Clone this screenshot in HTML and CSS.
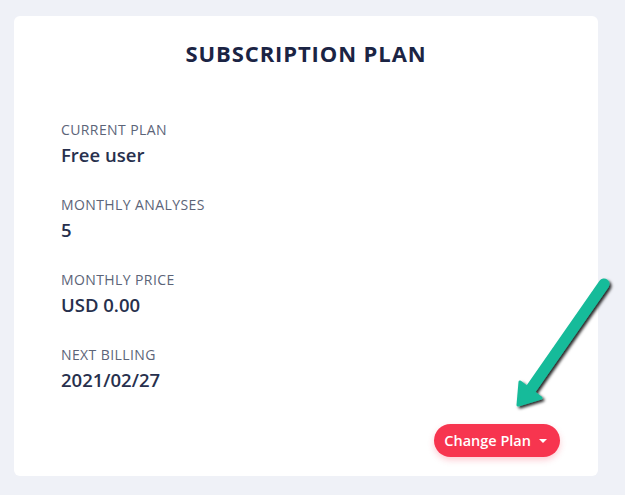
FILE: index.html
```html
<!DOCTYPE html>
<html lang="en">
<head>
    <meta charset="UTF-8">
    <meta name="viewport" content="width=device-width, initial-scale=1.0">
    <title>Subscription Plan</title>
    <link rel="stylesheet" href="styles.css">
</head>
<body>

    <div class="card">
        <h1>SUBSCRIPTION PLAN</h1>

        <div class="plan-info">
            <div class="item">
                <div class="label">CURRENT PLAN</div>
                <div class="value">Free user</div>
            </div>
            <div class="item">
                <div class="label">MONTHLY ANALYSES</div>
                <div class="value">5</div>
            </div>
            <div class="item">
                <div class="label">MONTHLY PRICE</div>
                <div class="value">USD 0.00</div>
            </div>
            <div class="item">
                <div class="label">NEXT BILLING</div>
                <div class="value">2021/02/27</div>
            </div>
        </div>

        <div class="actions">
            <button class="change-plan">Change Plan <span class="caret"></span></button>
        </div>
    </div>

    <!-- pointer arrow drawn over the screenshot -->
    <svg class="arrow" width="625" height="495" viewBox="0 0 625 495">
        <defs>
            <filter id="shadow" x="-20%" y="-20%" width="140%" height="140%">
                <feDropShadow dx="2" dy="2" stdDeviation="1.5" flood-color="#000" flood-opacity="0.85"/>
            </filter>
        </defs>
        <g filter="url(#shadow)" fill="#17bb9a" stroke="#17bb9a" stroke-linecap="round" stroke-linejoin="round">
            <line x1="604" y1="284" x2="526" y2="396" stroke-width="11"/>
            <polygon points="518,405 520,382 541,398" stroke-width="3"/>
        </g>
    </svg>

</body>
</html>
```

FILE: styles.css
```css
body {
    font-family: "Open Sans", Arial, sans-serif;
    background-color: #eff1f7;
    margin: 0;
    padding: 16px 27px 19px 14px;
}
.card {
    background-color: white;
    border-radius: 6px;
    height: 460px;
    box-sizing: border-box;
    padding: 22px 38px 19px 47px;
    display: flex;
    flex-direction: column;
}
h1 {
    margin: 0 -38px 0 -47px;
    font-size: 22px;
    font-weight: 700;
    color: #1b2444;
    text-align: center;
    line-height: 30px;
    letter-spacing: 0.9px;
}
.plan-info {
    margin-top: 52px;
    display: flex;
    flex-direction: column;
    gap: 28px;
}
.label {
    font-size: 14px;
    font-weight: 400;
    color: #5c6478;
    line-height: 20px;
    letter-spacing: 0.4px;
}
.value {
    font-size: 18.5px;
    font-weight: 600;
    color: #27304d;
    line-height: 25px;
    margin-top: 2px;
}
.actions {
    margin-top: auto;
    display: flex;
    justify-content: flex-end;
}
.change-plan {
    background-color: #f7354f;
    color: white;
    border: none;
    border-radius: 17px;
    height: 33px;
    padding: 0 13px 0 10px;
    font-family: "Open Sans", Arial, sans-serif;
    font-size: 14.5px;
    font-weight: 600;
    cursor: pointer;
    box-shadow: 0 3px 6px rgba(247, 53, 79, 0.25);
    display: flex;
    align-items: center;
    gap: 8px;
}
.caret {
    width: 0;
    height: 0;
    border-left: 4px solid transparent;
    border-right: 4px solid transparent;
    border-top: 4px solid white;
}
.arrow {
    position: absolute;
    left: 0;
    top: 0;
    pointer-events: none;
}
```
